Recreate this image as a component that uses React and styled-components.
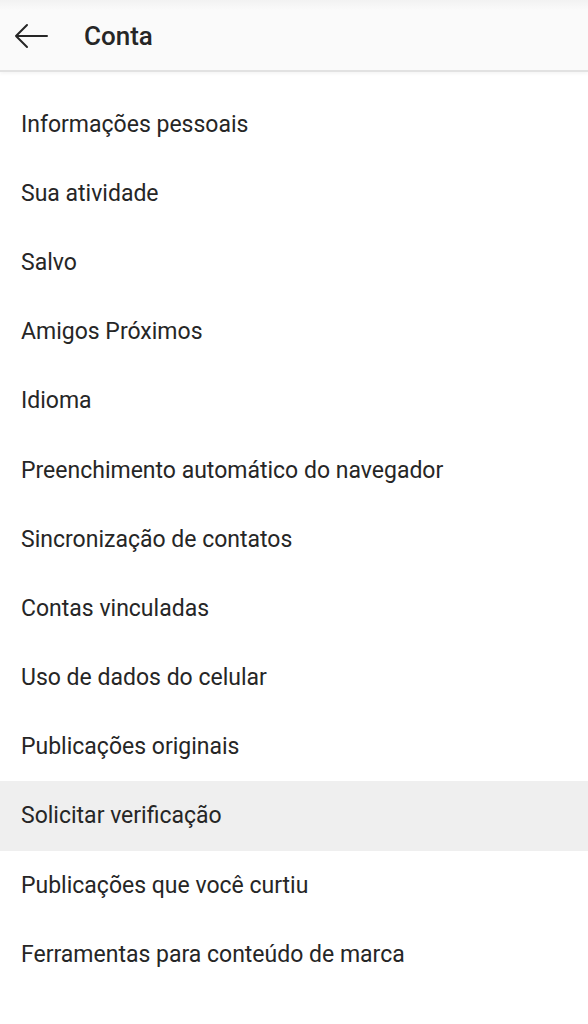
import React from 'react';
import styled, { createGlobalStyle } from 'styled-components';

const items = [
  'Informações pessoais',
  'Sua atividade',
  'Salvo',
  'Amigos Próximos',
  'Idioma',
  'Preenchimento automático do navegador',
  'Sincronização de contatos',
  'Contas vinculadas',
  'Uso de dados do celular',
  'Publicações originais',
  'Solicitar verificação',
  'Publicações que você curtiu',
  'Ferramentas para conteúdo de marca',
];

const App = () => (
  <Page>
    <GlobalStyle />
    <Header>
      <BackButton aria-label="Voltar">
        <svg width="36" height="26" viewBox="0 0 36 26" fill="none">
          <path
            d="M34 13H3M14 2L3 13l11 11"
            stroke="#262626"
            strokeWidth="2"
            strokeLinecap="round"
            strokeLinejoin="round"
          />
        </svg>
      </BackButton>
      <Title>Conta</Title>
    </Header>
    <List>
      {items.map((label) => (
        <Row key={label} active={label === 'Solicitar verificação'}>
          {label}
        </Row>
      ))}
    </List>
  </Page>
);

const GlobalStyle = createGlobalStyle`
  body {
    margin: 0;
    background: #fff;
    font-family: Roboto, "Liberation Sans", sans-serif;
    color: #262626;
  }
`;

const Page = styled.div`
  width: 588px;
  min-height: 1024px;
  background: #fff;
`;

const Header = styled.div`
  height: 70px;
  display: flex;
  align-items: center;
  background: linear-gradient(#f2f2f2 0px, #fafafa 10px, #fafafa 100%);
  border-bottom: 2px solid #e2e2e2;
  box-shadow: 0 2px 3px rgba(0, 0, 0, 0.04);
`;

const BackButton = styled.div`
  width: 36px;
  height: 26px;
  margin-left: 13px;
  margin-top: 1px;
  display: flex;
`;

const Title = styled.span`
  margin-left: 35px;
  font-size: 26px;
  font-weight: 500;
  color: #262626;
  margin-top: 1px;
`;

const List = styled.div`
  padding-top: 17.5px;
  display: flex;
  flex-direction: column;
`;

const Row = styled.div`
  height: 69.2px;
  display: flex;
  align-items: center;
  padding-left: 21px;
  font-size: 23px;
  color: #262626;
  background: ${(props) => (props.active ? '#efefef' : 'transparent')};
`;

export default App;
